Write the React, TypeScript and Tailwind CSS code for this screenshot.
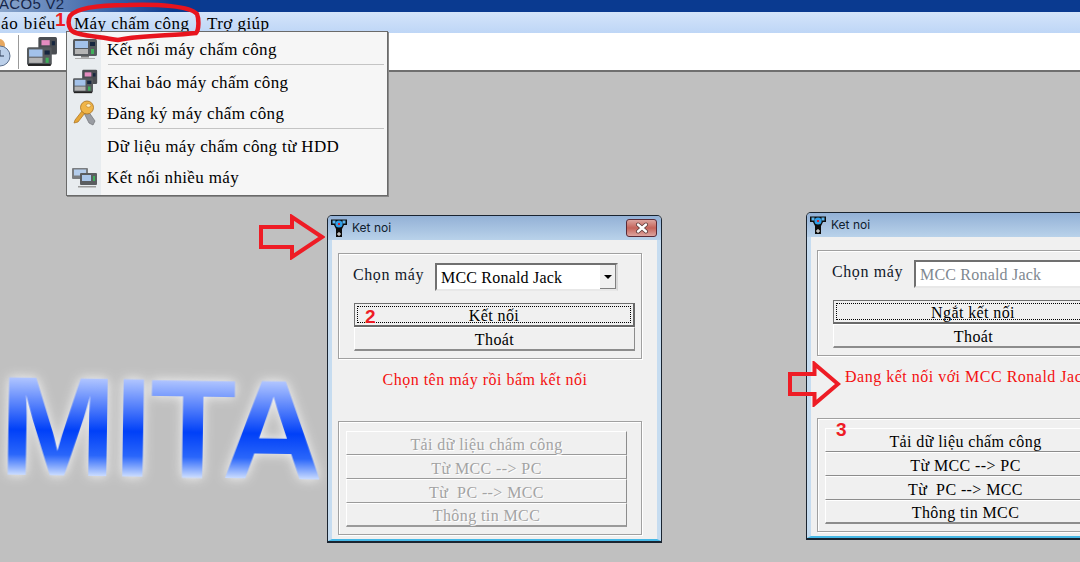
const serif = { fontFamily: '"Liberation Serif", serif' };

const Machine = ({ x = 0, y = 0 }: { x?: number; y?: number }) => (
  <g transform={`translate(${x} ${y})`}>
    <rect x="0" y="0" width="24" height="17" rx="1.5" fill="#565a5e" />
    <rect x="2" y="2" width="13" height="7" fill="#a3c2ea" />
    <rect x="2" y="10" width="13" height="5" fill="#b4b4b4" />
    <rect x="17" y="3" width="5" height="4" fill="#16263f" />
    <rect x="18" y="10" width="3" height="5" fill="#3fae5a" />
  </g>
);

const ConnectIcon = () => (
  <svg width="26" height="22" viewBox="0 0 26 22">
    <Machine x={1} y={1} />
    <rect x="9" y="18" width="8" height="1.5" fill="#777" />
    <rect x="3" y="20" width="20" height="1" fill="#aaa" />
  </svg>
);

const DeclareIcon = ({ size = 25 }: { size?: number }) => (
  <svg width={size} height={size} viewBox="0 0 30 30">
    <rect x="11" y="1" width="18" height="17" rx="1.5" fill="#4a4d52" />
    <rect x="14" y="4" width="8" height="5" fill="#e58cc0" />
    <rect x="24" y="5" width="3" height="4" fill="#16263f" />
    <Machine x={0} y={11} />
    <rect x="1" y="27" width="22" height="2" fill="#222" />
  </svg>
);

const KeyIcon = () => (
  <svg width="24" height="26" viewBox="0 0 24 26">
    <path d="M13 8 L22 21 L20 25 L16 23 L10 11 Z" fill="#9a9da3" stroke="#6e7176" strokeWidth="0.7" />
    <path d="M9 11 L2 20 L1 23 L5 22 L12 13 Z" fill="#e6a637" stroke="#a8701c" strokeWidth="0.7" />
    <circle cx="14" cy="7.5" r="6.5" fill="#f0b548" stroke="#a8701c" strokeWidth="0.8" />
    <ellipse cx="15.5" cy="5.5" rx="2.4" ry="1.7" fill="#fff0c8" stroke="#a8701c" strokeWidth="0.5" />
  </svg>
);

const MultiIcon = () => (
  <svg width="26" height="22" viewBox="0 0 26 22">
    <rect x="0" y="1" width="16" height="11" rx="1" fill="#7a7d80" />
    <rect x="2" y="2.5" width="12" height="6" fill="#b4cdec" />
    <rect x="8" y="6" width="17" height="12" rx="1" fill="#5a5d60" />
    <rect x="10" y="8" width="9" height="6" fill="#a9c6ea" />
    <rect x="21" y="9" width="2" height="5" fill="#3fae5a" />
    <rect x="6" y="19" width="18" height="1.5" fill="#999" />
  </svg>
);

const TitleIcon = () => (
  <svg width="16" height="18" viewBox="0 0 16 18" className="shrink-0">
    <path d="M0 0.5h16v5.5h-3l-2 4v2h-6v-2l-2-4h-3z" fill="#0c0c0c" />
    <rect x="1.5" y="1.5" width="3" height="3" fill="#5eb4ea" />
    <rect x="11.5" y="1.5" width="3" height="3" fill="#5eb4ea" />
    <circle cx="8" cy="5" r="3.6" fill="#2f9fe8" />
    <rect x="7" y="4" width="2" height="2" fill="#d8202a" />
    <rect x="5" y="12" width="6" height="6" fill="#0c0c0c" />
    <path d="M8 13v4M6 15h4" stroke="#fff" strokeWidth="1" />
  </svg>
);

const Button = ({ label, focus, disabled, last }: { label: string; focus?: boolean; disabled?: boolean; last?: boolean }) => (
  <div
    style={serif}
    className={`relative flex h-6 items-center justify-center border-t border-l bg-[#f0f0f0] pt-[3px] text-base tracking-[0.4px] whitespace-pre ${
      focus
        ? 'border-t-[#707070] border-l-[#707070] border-r-2 border-b-2 border-r-[#696969] border-b-[#696969]'
        : `border-t-white border-l-white border-r border-r-[#8c8c8c] ${last ? 'border-b-2' : 'border-b'} ${disabled ? 'border-b-[#9a9a9a]' : 'border-b-[#8c8c8c]'}`
    } ${disabled ? 'text-[#a3a3a3] [text-shadow:1px_1px_0_#fff]' : 'text-black'}`}
  >
    {focus && <span className="absolute inset-[2px] border border-dotted border-black" />}
    <span className="relative">{label}</span>
  </div>
);

const Group = ({ className, children }: { className: string; children: React.ReactNode }) => (
  <div className={`w-[304px] border border-[#a0a0a0] shadow-[inset_1px_1px_0_#fff,1px_1px_0_#fff] ${className}`}>{children}</div>
);

const KetNoiWindow = ({
  className,
  connected,
}: {
  className: string;
  connected?: boolean;
}) => (
  <div className={`absolute flex h-[328px] w-[335px] flex-col rounded-t-[5px] border border-[#1a2430] border-b-2 ${className}`}>
    <div className="flex h-6 shrink-0 items-center rounded-t-[4px] bg-gradient-to-b from-[#93b1d6] to-[#b9d2ea] pl-[3px]">
      <TitleIcon />
      <span className="ml-[5px] font-['Inter'] text-xs text-[#10202e]">Ket noi</span>
      {!connected && (
        <span className="ml-auto mr-[4px] flex h-[18px] w-[31px] items-center justify-center rounded-[3px] border border-[#5a2a36] bg-gradient-to-b from-[#dca5a0] via-[#c4635a] to-[#dca5a0]">
          <svg width="14" height="12" viewBox="0 0 14 12">
            <path d="M3 2.5l8 7M11 2.5l-8 7" stroke="#5a3a3a" strokeWidth="4" strokeLinecap="round" />
            <path d="M3 2.5l8 7M11 2.5l-8 7" stroke="#fff" strokeWidth="2.4" strokeLinecap="round" />
          </svg>
        </span>
      )}
    </div>
    <div className="flex flex-1 flex-col border-x-[4px] border-b-2 border-x-[#c6dcf0] border-b-[#46b8e6] bg-[#f0f0f0] pl-[6px] pt-[13px]">
      <Group className="h-[106px] pl-[14px] pr-[15px] pt-[9px]">
        <div className="flex items-start" style={serif}>
          <span className="w-[82px] text-base tracking-[0.6px] text-[#10182a]">Chọn máy</span>
          <div className="flex h-[28px] w-[183px] items-center border-2 border-t-[#707070] border-l-[#707070] border-r-[#d8d8d8] border-b-[#e8e8e8] bg-white pl-[4px] pt-[2px]">
            <span className={`flex-1 text-base tracking-[0.2px] ${connected ? 'text-[#808890]' : 'text-black'}`}>MCC Ronald Jack</span>
            {!connected && (
              <span className="-mt-[2px] flex h-[calc(100%+2px)] w-[16px] items-center justify-center border-r border-b border-[#808080] bg-[#f0f0f0]">
                <span className="h-0 w-0 border-x-[4px] border-t-[4px] border-x-transparent border-t-black" />
              </span>
            )}
          </div>
        </div>
        <div className="mt-[12px] ml-[1px] flex w-[281px] flex-col">
          <Button label={connected ? 'Ngắt kết nối' : 'Kết nối'} focus />
          <Button label="Thoát" last />
        </div>
      </Group>
      <p
        style={serif}
        className={`mt-[9px] h-[53px] w-[304px] text-base tracking-[0.5px] text-[#f41010] ${connected ? 'pl-[28px] whitespace-nowrap' : 'pr-[10px] text-center'}`}
      >
        {connected ? 'Đang kết nối với MCC Ronald Jack' : 'Chọn tên máy rồi bấm kết nối'}
      </p>
      <Group className="h-[114px] px-[7px] pt-[9px]">
        <div className="flex w-[281px] flex-col">
          <Button label="Tải dữ liệu chấm công" disabled={!connected} />
          <Button label="Từ MCC --> PC" disabled={!connected} />
          <Button label="Từ  PC --> MCC" disabled={!connected} />
          <Button label="Thông tin MCC" disabled={!connected} last />
        </div>
      </Group>
    </div>
  </div>
);

const menuItems = [
  { label: 'Kết nối máy chấm công', icon: <ConnectIcon />, row: 'h-[33px] pt-[7px]', sep: true },
  { label: 'Khai báo máy chấm công', icon: <DeclareIcon />, row: 'h-[32px] pt-[7px]' },
  { label: 'Đăng ký máy chấm công', icon: <KeyIcon />, row: 'h-[32px] pt-[6px]', sep: true },
  { label: 'Dữ liệu máy chấm công từ HDD', icon: null, row: 'h-[33px] pt-[7px]' },
  { label: 'Kết nối nhiều máy', icon: <MultiIcon />, row: 'h-[32px] pt-[5px]' },
];

const Arrow = ({ className, w, h }: { className: string; w: number; h: number }) => (
  <svg className={`absolute ${className}`} width={w} height={h} viewBox={`0 0 ${w} ${h}`}>
    <path
      d={`M2 ${h * 0.28} H${w * 0.5} V3 L${w - 3} ${h / 2} L${w * 0.5} ${h - 3} V${h * 0.72} H2 Z`}
      fill="none"
      stroke="#ee1c25"
      strokeWidth="4"
    />
  </svg>
);

const App = () => (
  <div className="relative flex h-[562px] w-[1080px] flex-col overflow-hidden bg-[#c0c0c0]">
    {/* app chrome */}
    <div className="flex h-3 shrink-0 items-center overflow-hidden bg-gradient-to-r from-[#8ba6cc] via-[#0a3a90] via-[16%] to-[#0a3a90]">
      <span className="-mt-[5px] -ml-[1px] font-['Liberation_Sans'] text-[15px] leading-none tracking-[0.3px] whitespace-nowrap text-[#16264a]">ACO5 V2</span>
    </div>
    <div style={serif} className="flex h-[21px] shrink-0 items-center bg-gradient-to-b from-[#d4e4fa] to-[#bed6f6] pt-[2px] text-[17px] tracking-[0.45px] text-black">
      <span className="w-[74px] pl-[1px] tracking-[0.8px]">áo biểu</span>
      <span className="w-[133px] underline decoration-1 underline-offset-2">Máy chấm công</span>
      <span>Trợ giúp</span>
    </div>
    <div className="flex h-[39px] shrink-0 items-center border-b-2 border-b-[#6f6f6f] bg-white">
      <svg width="11" height="30" viewBox="0 0 11 30" className="mt-[1px]">
        <circle cx="-1" cy="8" r="6" fill="#e7a860" />
        <circle cx="0" cy="19" r="10" fill="#bcd0ea" stroke="#5a6f8e" />
        <path d="M0 19h4M0 19v-6" stroke="#2a3a55" />
      </svg>
      <span className="ml-[7px] h-[34px] w-px bg-[#999]" />
      <span className="ml-[8px] flex"><DeclareIcon size={31} /></span>
    </div>

    {/* dropdown */}
    <div className="absolute left-[66px] top-[31px] flex h-[165px] w-[322px] flex-col border border-[#6a6a6a] bg-[#f6f6f6] shadow-[1px_1px_0_#888]" style={serif}>
      {menuItems.map((item) => (
        <div key={item.label} className="relative flex shrink-0">
          <div className="flex w-[34px] items-center justify-center bg-[#e8ecef] pl-[2px]">{item.icon}</div>
          <div className={`pl-[6px] text-[17px] leading-[22px] tracking-[0.35px] text-black ${item.row}`}>{item.label}</div>
          {item.sep && <span className="absolute bottom-0 left-[41px] right-[3px] h-px bg-[#c4c4c4]" />}
        </div>
      ))}
      <div className="w-[34px] flex-1 bg-[#e8ecef]" />
    </div>

    {/* red annotations over the menu */}
    <svg className="absolute left-[66px] top-[2px]" width="136" height="42" viewBox="0 0 136 42">
      <path
        d="M4 14 C10 6 32 3 62 3 C92 2 124 4 131 12 C133 17 133 28 130 31 C106 34 78 33 52 38 C32 34 10 34 5 28 C2 24 2 18 4 14 Z"
        fill="none"
        stroke="#e8141e"
        strokeWidth="4.5"
      />
    </svg>
    <span className="absolute left-[55px] top-[6px] font-['Liberation_Sans'] text-[19px] font-bold text-[#ee1c25]">1</span>

    {/* logo */}
    <div className="absolute -left-[1px] top-[363px] rotate-[0.9deg] font-['Liberation_Sans'] [filter:drop-shadow(0_0_6px_#f6f6f6)]">
      <span className="block bg-[linear-gradient(to_bottom,#b4c8ff_12%,#0040f8_53%,#2a66fa_72%,#d8e6ff_89%)] bg-clip-text text-[141px] leading-[130px] font-bold tracking-[-3px] text-transparent">
        MITA
      </span>
    </div>

    <KetNoiWindow className="left-[327px] top-[215px]" />
    <KetNoiWindow className="left-[806px] top-[212px]" connected />

    <Arrow className="left-[259px] top-[214px]" w={66} h={46} />
    <Arrow className="left-[788px] top-[361px]" w={53} h={46} />
    <span className="absolute left-[365px] top-[303px] font-['Liberation_Sans'] text-[19px] font-bold text-[#ee1c25]">2</span>
    <span className="absolute left-[836px] top-[416px] font-['Liberation_Sans'] text-[19px] font-bold text-[#ee1c25]">3</span>
  </div>
);

export default App;
